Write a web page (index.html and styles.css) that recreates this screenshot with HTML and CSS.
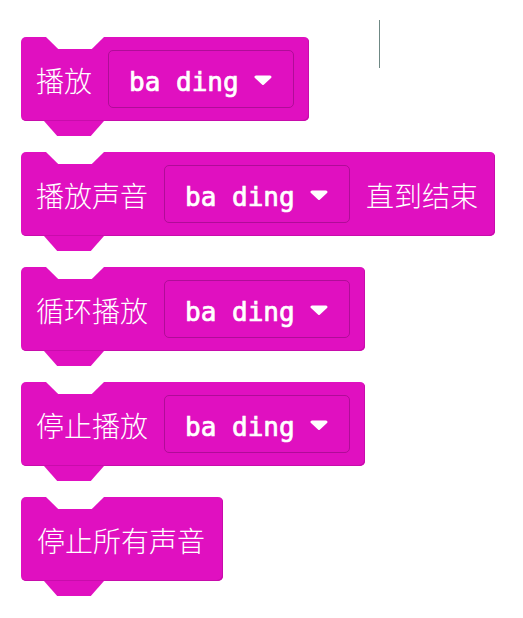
FILE: index.html
```html
<!DOCTYPE html>
<html lang="zh">
<head>
<meta charset="utf-8">
<title>Music blocks</title>
<link rel="stylesheet" href="styles.css">
</head>
<body>
<div class="cursor"></div>
<div class="stack">
  <div class="block">
    <span class="label">播放</span>
    <span class="dropdown"><span class="value">ba ding</span><svg class="arrow" width="18" height="10" viewBox="0 0 18 10"><polygon points="2,2 16,2 9,8.5" /></svg></span>
  </div>
  <div class="block block--text-end">
    <span class="label">播放声音</span>
    <span class="dropdown"><span class="value">ba ding</span><svg class="arrow" width="18" height="10" viewBox="0 0 18 10"><polygon points="2,2 16,2 9,8.5" /></svg></span>
    <span class="label">直到结束</span>
  </div>
  <div class="block">
    <span class="label">循环播放</span>
    <span class="dropdown"><span class="value">ba ding</span><svg class="arrow" width="18" height="10" viewBox="0 0 18 10"><polygon points="2,2 16,2 9,8.5" /></svg></span>
  </div>
  <div class="block">
    <span class="label">停止播放</span>
    <span class="dropdown"><span class="value">ba ding</span><svg class="arrow" width="18" height="10" viewBox="0 0 18 10"><polygon points="2,2 16,2 9,8.5" /></svg></span>
  </div>
  <div class="block block--text-end block--solo">
    <span class="label">停止所有声音</span>
  </div>
</div>
</body>
</html>
```
FILE: styles.css
```css
html, body {
  margin: 0;
  padding: 0;
  background: #ffffff;
}

body {
  width: 523px;
  height: 618px;
  position: relative;
  overflow: hidden;
}

.cursor {
  position: absolute;
  left: 379px;
  top: 20px;
  width: 1px;
  height: 48px;
  background: #6f8884;
}

.stack {
  display: flex;
  flex-direction: column;
  align-items: flex-start;
  gap: 31px;
  padding: 37px 0 0 21px;
}

.block {
  position: relative;
  display: flex;
  align-items: center;
  gap: 16px;
  height: 84px;
  box-sizing: border-box;
  padding: 0 15px;
  background: #e010c0;
  border-radius: 5px;
  box-shadow: inset -1px -1px 0 #c80cab;
}

.block--text-end {
  padding-right: 17px;
}

.block--solo {
  padding-left: 16px;
  padding-right: 18px;
}

.block::before {
  content: "";
  position: absolute;
  left: 25px;
  top: 0;
  width: 58px;
  height: 12px;
  background: #ffffff;
  clip-path: polygon(0 0, 100% 0, 79% 100%, 21% 100%);
}

.block::after {
  content: "";
  position: absolute;
  left: 23px;
  top: 100%;
  width: 60px;
  height: 15px;
  background: #e010c0;
  clip-path: polygon(0 0, 100% 0, 78% 100%, 22% 100%);
}

.label {
  font-family: "Noto Sans CJK SC", "Noto Sans", sans-serif;
  font-size: 28px;
  font-weight: 300;
  color: #ffffff;
  line-height: 1;
  white-space: nowrap;
  padding-top: 1px;
}

.dropdown {
  display: flex;
  align-items: center;
  box-sizing: border-box;
  width: 186px;
  height: 58px;
  padding: 0 0 0 20px;
  border: 1px solid #b00c98;
  border-radius: 5px;
  background: #e010c0;
}

.value {
  font-family: "DejaVu Sans Mono", "Liberation Mono", monospace;
  font-size: 26px;
  font-weight: normal;
  -webkit-text-stroke: 0.7px #ffffff;
  color: #ffffff;
  line-height: 1;
  white-space: pre;
  width: 111px;
  padding-top: 5px;
}

.arrow {
  margin-left: 14px;
  margin-top: 2px;
}

.arrow polygon {
  fill: #ffffff;
  stroke: #ffffff;
  stroke-width: 3;
  stroke-linejoin: round;
}
```
